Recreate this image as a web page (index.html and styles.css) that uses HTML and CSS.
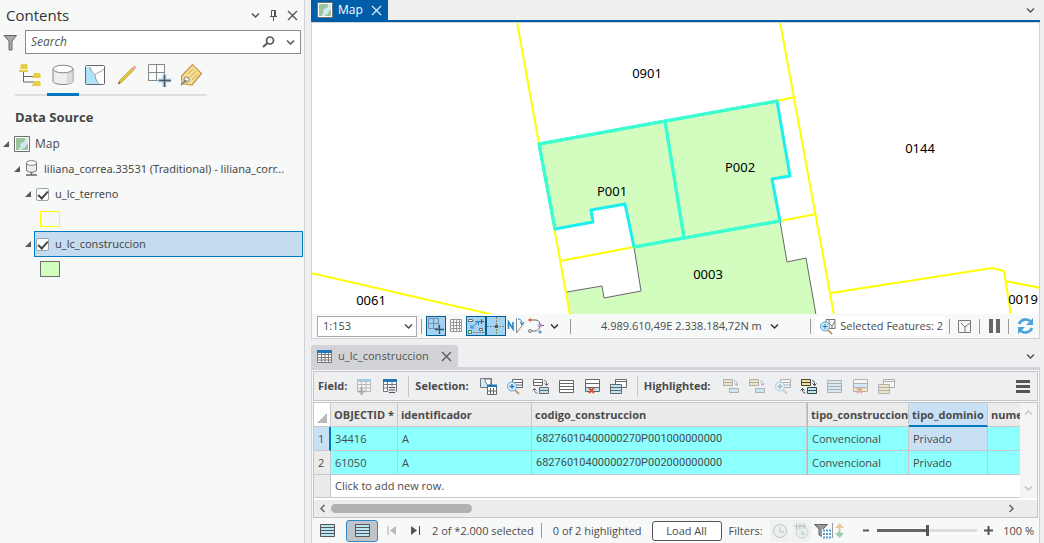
FILE: index.html
```html
<!DOCTYPE html>
<html lang="en">
<head>
<meta charset="utf-8">
<title>Map</title>
<link rel="stylesheet" href="styles.css">
</head>
<body>
<svg class="sprite" aria-hidden="true">
  <symbol id="chev" viewBox="0 0 9 9"><path d="M1 2.5 4.5 6 8 2.5" fill="none" stroke="currentColor" stroke-width="1.5"/></symbol>
  <symbol id="close" viewBox="0 0 11 11"><path d="M1 1 10 10M10 1 1 10" fill="none" stroke="currentColor" stroke-width="1.4"/></symbol>
  <symbol id="mapicon" viewBox="0 0 16 16"><path d="M.5.5h15v15H.5z" fill="#fff" stroke="#6e6e6e"/><path d="M2 2h12v12H2z" fill="#d3e8f5"/><path d="M2 2h9v2l-1 2-3 1-1 2 1 2-2 1v2H2zM13 8h1v6H8v-2l2 1 1-2 1-1z" fill="#9cc49d"/></symbol>
  <symbol id="tri" viewBox="0 0 6 6"><path d="M6 0v6H0z" fill="#595959"/></symbol>
  <symbol id="rows" viewBox="0 0 15 13"><path d="M.5.5h14v12H.5zM1 3.500h13M1 6.500h13M1 9.500h13" fill="var(--fill,#fff)" stroke="currentColor"/></symbol>
  <symbol id="switch" viewBox="0 0 17 17"><path d="M1.500 1.500h9v6h-9zM1.500 4.500h9" fill="var(--top,#fff)" stroke="currentColor"/><path d="M7.500 9.500h9v6h-9zM7.500 12.500h9" fill="var(--fill,#b8e6f5)" stroke="currentColor"/><path d="M12 2.500c2 0 2.500 1 2.500 5M12.500 5.500l2 2 2-2M5.500 15c-2.500 0-3-1-3-5M.5 12.500l2-2 2 2" fill="none" stroke="currentColor"/></symbol>
  <symbol id="moverow" viewBox="0 0 17 17"><path d="M1.500 1.500h9v6h-9zM1.500 4.500h9" fill="#f0d77a" stroke="currentColor"/><path d="M7.500 10.500h9v4h-9z" fill="#9fdcf2" stroke="currentColor"/><path d="M12 2.500c2 0 2.500 1 2.500 5M12.500 5.500l2 2 2-2" fill="none" stroke="currentColor"/></symbol>
  <symbol id="zoomrows" viewBox="0 0 17 17"><path d="M6.500 1.500h10v8h-10zM7 4.500h9M7 7h9" fill="#fff" stroke="currentColor"/><circle cx="6" cy="8.500" r="4.500" fill="#dff3fc" stroke="#5fa3d3"/><path d="M3.500 8.500h5M6 6v5" stroke="#2b78b5" stroke-width="1.300"/><path d="m9 12 4 4" stroke="#c39a72" stroke-width="2"/></symbol>
  <symbol id="clearrows" viewBox="0 0 16 16"><path d="M.5 1.500h14v12H.5z" fill="#fff"/><path d="M1 5h13v4H1z" fill="var(--top,#fff)"/><path d="M1 9h13v4H1z" fill="var(--fill,#b8e6f5)"/><path d="M.5 1.500h14v12H.5zM1 5.500h13M1 9.500h13" fill="none" stroke="currentColor"/><path d="m4 10 5 5m0-5-5 5" stroke="#d9512c" stroke-width="2"/></symbol>
  <symbol id="copyrows" viewBox="0 0 17 17"><path d="M5.500 1.500h11v8h-11zM6 3.500h10" fill="#fff" stroke="currentColor"/><path d="M.5 6.500h11v9H.5zM1 9.500h10M1 12.500h10" fill="var(--fill,#b8e6f5)" stroke="currentColor"/></symbol>
  <symbol id="table" viewBox="0 0 15 13"><path d="M.5.5h14v12H.5zM1 4.500h13M1 7.500h13M1 10h13M4.500 3v10M8 3v10M11.500 3v10" fill="#fff" stroke="#7a7a7a"/><path d="M0 0h15v3H0z" fill="#2376b8"/></symbol>
</svg>

<aside class="contents">
  <header class="contents-head">
    <h1>Contents</h1>
    <button class="plain" aria-label="Options"><svg width="9" height="9"><use href="#chev"/></svg></button>
    <button class="plain" aria-label="Pin"><svg width="9" height="11"><path d="M2.500.5h4v6h-4zM5.500.5v6M1 6.500h7M4.500 6.500V11" fill="none" stroke="currentColor"/></svg></button>
    <button class="plain" aria-label="Close"><svg width="11" height="11"><use href="#close"/></svg></button>
  </header>
  <div class="search-row">
    <svg width="15" height="17"><path d="M1 1.500h12.500L9 7v9H6V7z" fill="#a9a9a9" stroke="#666"/></svg>
    <div class="search">
      <input type="search" aria-label="Search" placeholder="Search">
      <button class="plain" aria-label="Find"><svg width="13" height="12"><circle cx="8" cy="4.500" r="3.500" fill="none" stroke="currentColor" stroke-width="1.700"/><path d="m5.500 7-4.500 4" stroke="currentColor" stroke-width="2"/></svg></button>
      <button class="plain" aria-label="Search options"><svg width="9" height="9"><use href="#chev"/></svg></button>
    </div>
  </div>
  <nav class="views">
    <button class="view" aria-label="Drawing order"><svg width="24" height="24"><path d="M4.500 8v11H15M4.500 13.500H15" fill="none" stroke="#666"/><path d="M2 1h6l1 5H1zM0 7h9v2H0zM15 10h6l1 5h-9zM15 18h6l1 5h-9z" fill="#e6cf48"/></svg></button>
    <button class="view view-on" aria-label="Data source"><svg width="24" height="24"><path d="M2 6v12c0 2 4 3.500 10 3.500S22 20 22 18V6" fill="#eee" stroke="#858585"/><path d="M16 9.500v11.500c4-.5 5.500-1.500 5.500-3V7z" fill="#dadada"/><ellipse cx="12" cy="6" rx="10" ry="3.800" fill="#fff" stroke="#858585"/></svg></button>
    <button class="view" aria-label="Selection"><svg width="24" height="24"><path d="M2.500 3.500h19v18h-19z" fill="#fff"/><path d="M3 4h4l4 9 4 8H3z" fill="#aee3f8"/><path d="M7 4c1 5 4 6 5 9s1 5 4 8M12 12c4-4 5-2 9-6" fill="none" stroke="#7d98a7"/><rect x="2.500" y="2.500" width="19" height="19" rx="1" fill="none" stroke="#666"/></svg></button>
    <button class="view" aria-label="Editing"><svg width="24" height="24"><path d="m3 21 2-4L17 5l2 2L7 19z" fill="#e0c63f" stroke="#b89f35" stroke-width=".7"/><path d="m17 5 2.500-2.500 2 2L19 7z" fill="#eda398"/><path d="m3 21 1-2.500L5.500 20z" fill="#555"/></svg></button>
    <button class="view" aria-label="Snapping"><svg width="24" height="24"><path d="M1.500 1.500h16v16h-16zM9.500 2v15M2 9.500h15" fill="#f9fafa" stroke="#888"/><path d="M17.500 11v13M11 17.500h13" stroke="#a8daf6" stroke-width="4"/><path d="M17.500 12v12M12 17.500h12" stroke="#555" stroke-width="1.500"/></svg></button>
    <button class="view" aria-label="Labeling"><svg width="24" height="24"><path d="M2.500 13 13.500 1.500l9 9L13 22l-10-1.500z" fill="#f5df8c" stroke="#cd9253" stroke-width="1.200"/><path d="m9 11 5-5m-3 8 6-6m-4 9 6-6" stroke="#c9ae67"/><circle cx="7.500" cy="16.500" r="2.500" fill="#fff" stroke="#777"/><path d="m2 22 5.500-5" stroke="#777" stroke-width="1.500"/></svg></button>
  </nav>
  <h2>Data Source</h2>
  <ul class="tree">
    <li class="node"><svg width="6" height="6"><use href="#tri"/></svg><svg width="16" height="16"><use href="#mapicon"/></svg><span>Map</span></li>
    <li class="node node-2"><svg width="6" height="6"><use href="#tri"/></svg><svg width="14" height="17"><path d="M1.500 3v7c0 3 10 3 10 0V3" fill="#eee" stroke="#777"/><ellipse cx="6.500" cy="3" rx="5" ry="2.300" fill="#fff" stroke="#777"/><path d="M6.500 12v3M1 15h11" stroke="#666" stroke-width="1.500"/></svg><span class="clip">liliana_correa.33531 (Traditional) - liliana_corr...</span></li>
    <li class="node node-3"><svg width="6" height="6"><use href="#tri"/></svg><label class="layer"><input type="checkbox" checked><span>u_lc_terreno</span></label></li>
    <li class="symbol"><span class="swatch swatch-parcel"></span></li>
    <li class="node node-3"><svg width="6" height="6"><use href="#tri"/></svg><label class="layer layer-on"><input type="checkbox" checked><span>u_lc_construccion</span></label></li>
    <li class="symbol"><span class="swatch swatch-building"></span></li>
  </ul>
</aside>

<main class="work">
  <div class="tabs">
    <div class="tab tab-map"><svg width="16" height="16"><use href="#mapicon"/></svg><span>Map</span><button class="plain" aria-label="Close map"><svg width="11" height="11"><use href="#close"/></svg></button></div>
    <button class="plain" aria-label="More views"><svg width="9" height="9"><use href="#chev"/></svg></button>
  </div>
  <section class="map-frame">
    <svg class="map" viewBox="312 23 727 291" preserveAspectRatio="xMinYMin slice">
      <path class="building" d="M539 144 665 121 777 101 790 176 772 179 780 221 787 262 806 258 816 315H571L567 292 602 286 604 298 641 291 634 247 625 204 591 210 593 222 555 229z"/>
      <path class="hole" d="M567 292 602 286 604 298 641 291 634 247 560 260z"/>
      <path class="outline" d="M567 292 602 286 604 298 641 291 634 247M780 221 787 262 806 258 816 315"/>
      <path class="parcel" d="M517 22 570 315M780 22 834 315M777 101 795 97M560 261 634 247M780 221 816 214M831 293 992 268 1004 271 1011 315M1005 281 1041 288M311 273 494 315"/>
      <path class="picked" d="M539 144 665 121 684 238 634 247 625 204 591 210 593 222 555 229zM665 121 777 101 790 176 772 179 780 221 684 238z"/>
      <path class="shared" d="M555 229 539 144 777 101M665 121 684 238M634 247 780 221"/>
      <g class="tags"><text x="647" y="78">0901</text><text x="612" y="196">P001</text><text x="740" y="172">P002</text><text x="920" y="153">0144</text><text x="708" y="279">0003</text><text x="371" y="305">0061</text><text x="1023" y="304">0019</text></g>
    </svg>
    <div class="status">
      <label class="scale"><select aria-label="Scale"><option>1:153</option></select><svg width="9" height="9"><use href="#chev"/></svg></label>
      <i class="rule"></i>
      <div class="toggles">
        <button class="toggle toggle-on" aria-label="Constraints"><svg width="18" height="18"><path d="M1.500 1.500h10v10h-10zM6.500 2v10M2 6.500h10" fill="none" stroke="#7291a6"/><path d="M12.500 8v9M8 12.500h9" stroke="#34566e" stroke-width="1.300"/></svg></button>
        <button class="toggle" aria-label="Grid"><svg width="18" height="18"><path d="M3.500 2.500h11v12h-11zM6.500 2v13M9.500 2v13M12.500 2v13M3 5.500h12M3 8.500h12M3 11.500h12" fill="none" stroke="#999"/></svg></button>
        <button class="toggle toggle-on" aria-label="Inference"><svg width="18" height="18"><path d="M1.500 2.500h4v2h-4zM12.500 11.500h3v2h-3z" fill="#fff" stroke="#666"/><path d="M4 11 11 5M4 11V8m0 3h3M8 4.500h3.500V8" fill="none" stroke="#2b86c6"/><path d="M1.500 13.500h3v3h-3z" fill="#dff0df" stroke="#3c8b4a"/><path d="M14.500 2v5M12 4.500h5" stroke="#555"/><path d="M6 15.500h11" stroke="#777" stroke-dasharray="2 1"/></svg></button>
        <button class="toggle toggle-on" aria-label="Snapping"><svg width="18" height="18"><path d="M9.500 0v18M0 9.500h18" stroke="#c6d9a8"/><path d="M9.500 0v18M0 9.500h18" stroke="#6f8a8e" stroke-dasharray="2 1"/><path d="M8 8h3v3H8z" fill="#465a60"/></svg></button>
        <button class="toggle" aria-label="North"><svg width="18" height="18"><path d="M1.500 12V5L6 12V5" fill="none" stroke="#2387cc" stroke-width="1.600"/><path d="M9.500 1v15L17 6" fill="none" stroke="#8a8a8a"/><path d="M11 2c3 0 4 2 4 5m-2-2 2 3 2-3" fill="none" stroke="#2387cc"/></svg></button>
        <button class="toggle" aria-label="Topology"><svg width="18" height="18"><path d="M3 3h6c3 0 4 3 4 5s-1 6-5 6H3M13 8.500h4" fill="none" stroke="#666"/><path d="m3 1 2 2-2 2-2-2z" fill="#db6842"/><circle cx="13" cy="8.500" r="2" fill="#b48fd0"/><circle cx="3" cy="14" r="1.500" fill="#fff" stroke="#777"/><path d="m13 13 2 2-2 2-2-2z" fill="#579ed2"/></svg></button>
        <button class="toggle toggle-more" aria-label="More tools"><svg class="dark" width="9" height="9"><use href="#chev"/></svg></button>
      </div>
      <i class="rule"></i>
      <output class="coords">4.989.610,49E 2.338.184,72N m</output>
      <button class="plain" aria-label="Units"><svg class="dark" width="9" height="9"><use href="#chev"/></svg></button>
      <i class="rule rule-last"></i>
      <button class="picked-count"><svg width="17" height="17"><path d="M7 1.500h9v9H7zM10 2v3l3 3 3-5M13 8v2" fill="#fff" stroke="#777"/><circle cx="6" cy="8.500" r="4.500" fill="#c9eafa" stroke="#5fa3d3"/><path d="M3.500 8.500h5M6 6v5" stroke="#2b78b5"/><path d="m9 12 4 4" stroke="#c39a72" stroke-width="2"/></svg><span>Selected Features: 2</span></button>
      <i class="rule"></i>
      <button class="plain" aria-label="Selection chip"><svg width="13" height="13"><path d="M.5.5h12v12H.5zM3 3l4 4 5-4M7 7v5" fill="none" stroke="#777"/></svg></button>
      <i class="rule"></i>
      <button class="plain" aria-label="Pause"><svg width="12" height="14"><path d="M1 0h4v14H1zM8 0h4v14H8z" fill="#666"/></svg></button>
      <i class="rule"></i>
      <button class="plain" aria-label="Refresh"><svg width="17" height="16"><path d="M2 6c2-5 9-6 12-2M15 10c-2 5-9 6-12 2" fill="none" stroke="#4aa3dc" stroke-width="2.600"/><path d="M16 0v7H9zM1 16V9h7z" fill="#4aa3dc"/></svg></button>
    </div>
  </section>

  <div class="tabs tabs-table">
    <div class="tab tab-table"><svg width="15" height="13"><use href="#table"/></svg><span>u_lc_construccion</span><button class="plain" aria-label="Close table"><svg width="11" height="11"><use href="#close"/></svg></button></div>
    <button class="plain" aria-label="More tables"><svg width="9" height="9"><use href="#chev"/></svg></button>
  </div>
  <section class="table-frame">
    <div class="toolbar">
      <b>Field:</b>
      <button class="tool tool-off" aria-label="Add field"><svg width="17" height="17"><path d="M1.500 2.500h13v11h-13zM2 6.500h12M2 10h12M5.500 3v10M10 3v10" fill="#fff" stroke="#777"/><path d="M1 1h14v3H1z" fill="#4b9ac9"/><path d="M5.500 9v8M2 13.500h7" stroke="#555" stroke-width="2"/></svg></button>
      <button class="tool" aria-label="Calculate field"><svg width="17" height="17"><path d="M1.500 2.500h13v11h-13zM2 6.500h12M2 10h12M5.500 3v10M10 3v10" fill="#fff" stroke="#777"/><path d="M1 1h14v3H1z" fill="#2376b8"/><path d="M6 8h8v8H6z" fill="#ece6f3"/><path d="M7 9.500h6M7 12h6M7 14.500h6" stroke="#555"/></svg></button>
      <i class="rule"></i>
      <b class="wide">Selection:</b>
      <button class="tool" aria-label="Select by attributes"><svg width="17" height="17"><path d="M.5.500h11v9H.500z" fill="#c8ecf6" stroke="#777"/><path d="M5 1c0 4 2 4 3 8l3-4V1z" fill="#fff" stroke="#777"/><path d="M7.500 7.500h9v9h-9zM10.500 10v6M13.500 10v6M8 13h8" fill="#fff" stroke="#666"/><path d="M7 6.500h10V9H7z" fill="#2376b8"/></svg></button>
      <button class="tool" aria-label="Zoom to selection"><svg width="17" height="17"><use href="#zoomrows"/></svg></button>
      <button class="tool" aria-label="Switch selection"><svg width="17" height="17"><use href="#switch"/></svg></button>
      <button class="tool" aria-label="Select all"><svg width="15" height="13"><use href="#rows"/></svg></button>
      <button class="tool" aria-label="Clear selection"><svg width="16" height="16"><use href="#clearrows"/></svg></button>
      <button class="tool" aria-label="Copy rows"><svg width="17" height="17"><use href="#copyrows"/></svg></button>
      <i class="rule"></i>
      <b class="wide">Highlighted:</b>
      <button class="tool tool-off" aria-label="Unselect highlighted"><svg width="17" height="17"><use href="#moverow"/></svg></button>
      <button class="tool tool-off" aria-label="Reselect highlighted"><svg width="17" height="17"><use href="#moverow"/></svg></button>
      <button class="tool tool-off" aria-label="Zoom to highlighted"><svg width="17" height="17"><use href="#zoomrows"/></svg></button>
      <button class="tool tool-mixed" aria-label="Switch highlighted"><svg width="17" height="17"><use href="#switch"/></svg></button>
      <button class="tool tool-off tool-blue" aria-label="Highlight all"><svg width="15" height="13"><use href="#rows"/></svg></button>
      <button class="tool tool-off tool-gold" aria-label="Clear highlighted"><svg width="16" height="16"><use href="#clearrows"/></svg></button>
      <button class="tool tool-off tool-gold" aria-label="Copy highlighted"><svg width="17" height="17"><use href="#copyrows"/></svg></button>
      <button class="plain menu" aria-label="Menu"><svg width="14" height="13"><path d="M0 1.500h14M0 6.500h14M0 11.500h14" stroke="#555" stroke-width="3"/></svg></button>
    </div>
    <div class="grid">
      <div class="grid-view">
        <table>
          <colgroup><col class="c-no"><col class="c-id"><col class="c-ident"><col><col class="c-tipo"><col class="c-dom"><col class="c-num"></colgroup>
          <thead><tr><th class="corner"><svg width="10" height="10"><path d="M10 0v10H0z" fill="#b9b9b9"/></svg></th><th>OBJECTID *</th><th>identificador</th><th>codigo_construccion</th><th class="split">tipo_construccion</th><th class="active">tipo_dominio</th><th>nume</th></tr></thead>
          <tbody>
            <tr class="row"><th class="num current">1</th><td>34416</td><td>A</td><td class="code">68276010400000270P001000000000</td><td class="split">Convencional</td><td class="cell-on">Privado</td><td></td></tr>
            <tr class="row"><th class="num">2</th><td>61050</td><td>A</td><td class="code">68276010400000270P002000000000</td><td class="split">Convencional</td><td>Privado</td><td></td></tr>
            <tr class="new"><th class="num"></th><td colspan="6">Click to add new row.</td></tr>
          </tbody>
        </table>
        <div class="vscroll"><svg class="up" width="9" height="9"><use href="#chev"/></svg><svg width="9" height="9"><use href="#chev"/></svg></div>
      </div>
      <div class="hscroll"><svg class="left" width="9" height="9"><use href="#chev"/></svg><div class="lane"><div class="bar"></div></div><svg class="right" width="9" height="9"><use href="#chev"/></svg></div>
    </div>
    <footer class="foot">
      <button class="plain mode tool-blue" aria-label="Show all records"><svg width="15" height="13"><use href="#rows"/></svg></button>
      <button class="mode-on tool-blue" aria-label="Show selected records"><svg width="15" height="13"><use href="#rows"/></svg></button>
      <button class="plain first" aria-label="First record"><svg width="10" height="9"><path d="M1 0v9" stroke="#aaa"/><path d="M9 0v9L3 4.500z" fill="#b9b9b9"/></svg></button>
      <button class="plain last" aria-label="Last record"><svg width="10" height="9"><path d="M9.500 0v9" stroke="#444"/><path d="M1 0v9l6-4.500z" fill="#555"/></svg></button>
      <span>2 of *2.000 selected</span>
      <i class="rule"></i>
      <span class="lit">0 of 2 highlighted</span>
      <button class="load">Load All</button>
      <span class="filters">Filters:</span>
      <button class="filter filter-off" aria-label="Time filter"><svg width="16" height="16"><circle cx="8" cy="8" r="6.500" fill="#e4f0e8" stroke="#668"/><path d="M8 4v5h4" fill="none" stroke="#568"/></svg></button>
      <button class="filter filter-off" aria-label="Range filter"><svg width="16" height="16"><circle cx="9" cy="9" r="6" fill="#d9ecdf" stroke="#899"/><path d="M1 3h12M3.500 0v6M7 0v6M11 0v6M9 8v3h3" fill="none" stroke="#568"/></svg></button>
      <button class="plain filter-rows" aria-label="Selection filter"><svg width="17" height="16"><path d="M.5 1.500h13L9 6v8L5 12V6z" fill="#999" stroke="#666"/><path d="M8 6h9v10H8z" fill="#fff"/><path d="M9 7.500h8M9 11h8M9 14.500h8" stroke="#4a9fd8" stroke-width="2" stroke-dasharray="2 1"/></svg></button>
      <i class="rule rule-near"></i>
      <button class="plain" aria-label="Extent filter"><svg width="11" height="15"><path d="M5.500 4v4" stroke="#edc79c" stroke-width="2"/><path d="M5.500 0 10 5H1z" fill="#edc79c"/><path d="M5.500 8v3" stroke="#9bcda9" stroke-width="2"/><path d="M5.500 15 10 10H1z" fill="#9bcda9"/></svg></button>
      <button class="plain zoom-out" aria-label="Zoom out"><svg width="8" height="9"><path d="M1 4.500h6" stroke="#555" stroke-width="2"/></svg></button>
      <input class="zoom" type="range" aria-label="Table zoom" min="0" max="100" value="50">
      <button class="plain" aria-label="Zoom in"><svg width="9" height="9"><path d="M0 4.500h9M4.500 0v9" stroke="#555" stroke-width="2"/></svg></button>
      <span class="percent">100 %</span>
    </footer>
  </section>
</main>
</body>
</html>
```
FILE: styles.css
```css
* { box-sizing: border-box; }
body {
  margin: 0;
  min-height: 100vh;
  display: flex;
  background: #eeeff1;
  color: #4a4a4a;
  font: 11px/16px "Open Sans", "Noto Sans", sans-serif;
}
svg { display: block; flex: none; }
.sprite { position: absolute; width: 0; height: 0; }
h1, h2, ul { margin: 0; padding: 0; }
button, input, select { font: inherit; color: inherit; }
button { cursor: pointer; }
.plain {
  display: flex;
  align-items: center;
  justify-content: center;
  flex: none;
  padding: 0;
  border: 0;
  background: none;
  color: #555;
}
.dark { color: #333; }
.rule { flex: none; width: 1px; height: 15px; background: #999; }

/* Contents pane */
.contents {
  flex: none;
  width: 305px;
  background: #f7f9f8;
  border-right: 1px solid #cfd1d6;
}
.contents-head {
  display: flex;
  align-items: center;
  gap: 9px;
  height: 30px;
  padding: 0 6px;
}
.contents-head h1 { flex: 1; font-size: 15px; font-weight: 400; line-height: 20px; color: #333; }
.search-row { display: flex; align-items: center; gap: 7px; padding: 0 3px; }
.search {
  flex: 1;
  display: flex;
  align-items: center;
  gap: 11px;
  height: 24px;
  padding: 0 5px;
  background: #fff;
  border: 1px solid #8a8a8a;
}
.search input {
  flex: 1;
  min-width: 0;
  padding: 0;
  border: 0;
  outline: 0;
  background: none;
  font-size: 12px;
  font-style: italic;
}
.search input::placeholder { color: #555; opacity: 1; }
.views {
  display: flex;
  width: 192px;
  margin: 6px 0 0 15px;
  border-bottom: 2px solid #dedede;
}
.view {
  display: flex;
  justify-content: center;
  width: 32px;
  height: 36px;
  margin-bottom: -2px;
  padding: 3px 0 0;
  border: 0;
  border-bottom: 3px solid transparent;
  background: none;
}
.view-on { border-bottom-color: #0079c1; }
.contents h2 { padding: 11px 15px 5px; font-size: 13px; line-height: 20px; color: #444; }
.tree { list-style: none; }
.node { display: flex; align-items: center; gap: 5px; height: 24px; padding: 0 3px; }
.node > span { font-size: 12px; white-space: nowrap; }
.node-2 { padding-left: 14px; height: 25px; }
.node .clip { font-family: "Noto Sans", sans-serif; font-size: 11px; }
.node-3 { padding-left: 25px; gap: 3px; height: 26px; }
.layer {
  flex: 1;
  display: flex;
  align-items: center;
  gap: 6px;
  height: 26px;
  margin-right: -2px;
  padding-left: 1px;
  border: 1px solid transparent;
  font-family: "Noto Sans", sans-serif;
}
.layer-on { background: #c5dbee; border-color: #0079c1; }
.layer input {
  appearance: none;
  display: grid;
  place-items: center;
  width: 13px;
  height: 13px;
  margin: 0;
  background: #fff;
  border: 1px solid #9ba3ad;
  border-radius: 2px;
}
.layer input:checked::before {
  content: "";
  width: 4px;
  height: 8px;
  margin-bottom: 2px;
  border: solid #444;
  border-width: 0 2px 2px 0;
  transform: rotate(42deg);
}
.symbol { display: flex; align-items: center; height: 24px; padding-left: 40px; }
.swatch { width: 20px; height: 16px; }
.swatch-parcel { border: 1px solid #ff0; }
.swatch-building { background: #d3ffbe; border: 1px solid #6e6e6e; }

/* Work area */
.work {
  flex: 1;
  min-width: 0;
  display: flex;
  flex-direction: column;
  padding: 0 4px 0 6px;
}
.tabs {
  display: flex;
  align-items: center;
  justify-content: space-between;
  height: 22px;
  padding-right: 5px;
  border-bottom: 2px solid #005ea8;
}
.tab { display: flex; align-items: center; gap: 5px; height: 100%; padding: 0 6px; font-size: 12px; }
.tab .plain { margin-left: 3px; }
.tab-map { background: #005ea8; color: #fff; }
.tab-map .plain { color: #d5e6f5; }
.map-frame {
  flex: 1;
  display: flex;
  flex-direction: column;
  border: 1px solid #cfd1d6;
  background: #fff;
}
.map { flex: 1 1 0; width: 100%; min-height: 0; }
.building { fill: #d3fdbe; }
.hole { fill: #fff; }
.outline { fill: none; stroke: #666; }
.parcel { fill: none; stroke: #ff0; stroke-width: 2; }
.picked { fill: none; stroke: #1eeeee; stroke-width: 3; }
.shared { fill: none; stroke: #3cffd0; stroke-width: 3; }
.picked, .shared { stroke-linejoin: round; }
.tags { font-family: "Noto Sans", sans-serif; font-size: 13px; text-anchor: middle; fill: #000; }
.status {
  display: flex;
  align-items: center;
  gap: 8px;
  height: 24px;
  padding: 0 5px;
  background: #f7f9f8;
}
.scale { display: grid; align-items: center; width: 100px; }
.scale select, .scale svg { grid-area: 1 / 1; }
.scale select {
  appearance: none;
  width: 100%;
  height: 21px;
  padding: 0 5px;
  border: 1px solid #aaa;
  border-radius: 0;
  background: #fff;
}
.scale svg { justify-self: end; margin-right: 4px; pointer-events: none; }
.scale + .rule { margin: 0 -4px; }
.toggles { display: flex; }
.toggle {
  display: grid;
  place-items: center;
  width: 20px;
  height: 20px;
  padding: 0;
  border: 1px solid transparent;
  background: none;
}
.toggle-more { width: 16px; }
.toggle-on { background: #a3d2f2; border-color: #005e95; }
.coords { margin-left: 22px; white-space: nowrap; }
.rule-last { margin-left: auto; }
.picked-count {
  display: flex;
  align-items: center;
  gap: 4px;
  height: 20px;
  margin: 0 -4px;
  padding: 0 2px 0 4px;
  border: 0;
  background: #fff;
  white-space: nowrap;
}

/* Attribute table */
.tabs-table { margin-top: 6px; height: 25px; border-bottom: 3px solid #d2d3d6; }
.tab-table { background: #d2d3d6; border-radius: 3px 3px 0 0; }
.tab-table, .tab-table .plain { color: #5c5c5c; }
.tab-table { gap: 6px; font-family: "Noto Sans", sans-serif; font-size: 11px; }
.tab-table .plain { margin-left: 6px; }
.table-frame { border: solid #cfd1d6; border-width: 0 1px; background: #f7f9f8; }
.toolbar {
  display: flex;
  align-items: center;
  height: 30px;
  margin: 1px 1px 0;
  padding: 0 7px 0 4px;
  border: 1px solid #c4c5c8;
  background: #eeeff1;
}
.toolbar b { margin-right: 4px; }
.toolbar .wide { margin-right: 7px; }
.toolbar .rule { height: 21px; margin: 0 6px 0 5px; background: #c5c5c5; }
.tool {
  display: grid;
  place-items: center;
  width: 26px;
  height: 24px;
  padding: 0;
  border: 0;
  background: none;
  color: #666;
}
.tool-off { opacity: .45; }
.tool-gold { --fill: #f4dd8f; --top: #b8e6f5; }
.tool-mixed { --top: #f4dd8f; color: #444; }
.tool-blue { --fill: #b8e6f5; }
.menu { margin-left: auto; }
.grid { margin: 1px 1px 0; border: 1px solid #c4c5c8; background: #fff; }
.grid-view { display: flex; }
table {
  flex: 1;
  width: 100%;
  min-width: 0;
  table-layout: fixed;
  border-collapse: separate;
  border-spacing: 0;
}
.c-no { width: 17px; }
.c-id { width: 67px; }
.c-ident { width: 134px; }
.c-tipo { width: 102px; }
.c-dom { width: 79px; }
.c-num { width: 32px; }
th, td {
  height: 24px;
  padding: 0 4px;
  border: solid #c8c8c8;
  border-width: 0 1px 1px 0;
  text-align: left;
  white-space: nowrap;
  overflow: hidden;
}
th { background: #ebebeb; font-weight: 700; }
thead th { padding: 1px 0 0 3px; }
thead .corner { padding: 7px 0 0 3px; background: #fff; }
.split { border-left: 1px solid #b8b8b8; }
.active { background: #c7e0f4; border-bottom: 2px solid #0079c1; }
.num { padding: 0 4px; font-weight: 400; }
.current { background: #c7e0f4; border-right: 2px solid #0079c1; }
.row td { background: #8cffff; }
.row .cell-on { background: #c7e0f4; }
.row .code { font-family: "Roboto", sans-serif; }
.new td, .new th { height: 23px; }
.new td { background: #fff; }
th:last-child, td:last-child { border-right: 0; }
.vscroll {
  display: flex;
  flex: none;
  flex-direction: column;
  align-items: center;
  justify-content: space-between;
  width: 17px;
  padding: 5px 0;
  background: #f4f4f4;
  color: #c4c4c4;
}
.up { transform: rotate(180deg); }
.left { transform: rotate(90deg); }
.right { transform: rotate(-90deg); }
.hscroll {
  display: flex;
  align-items: center;
  gap: 4px;
  height: 17px;
  margin-top: 2px;
  padding: 0 21px 0 4px;
  background: #ececec;
  color: #666;
}
.lane { flex: 1; }
.bar { width: 21%; height: 9px; border-radius: 5px; background: #b1b1b1; }
.foot {
  display: flex;
  align-items: center;
  gap: 7px;
  height: 25px;
  padding-left: 8px;
  white-space: nowrap;
}
.mode { margin-right: 4px; }
.mode-on {
  display: grid;
  place-items: center;
  width: 32px;
  height: 22px;
  padding: 0;
  border: 1px solid #2c86c8;
  border-radius: 3px;
  background: #c0c3c8;
  color: #555;
}
.first { margin: 0 6px 0 2px; }
.last { margin-right: 5px; }
.lit { margin: 0 3px 0 4px; }
.load {
  width: 70px;
  height: 20px;
  padding: 0;
  border: 1px solid #555;
  border-radius: 3px;
  background: #fff;
}
.filter { display: grid; place-items: center; width: 20px; height: 22px; padding: 0; border: 0; background: #f0f1f1; margin-right: -6px; }
.filter-off svg { opacity: .35; }
.foot .filter-rows { margin-left: 2px; }
.rule-near { margin: 0 -6px; }
.zoom-out { margin-left: auto; }
.zoom {
  appearance: none;
  width: 100px;
  height: 12px;
  margin: 0;
  background: linear-gradient(90deg, #666 50%, #dcdcdc 50%) center / 100% 3px no-repeat;
}
.zoom::-webkit-slider-thumb { appearance: none; width: 3px; height: 11px; background: #555; }
.percent { padding: 0 5px 0 3px; }
```
